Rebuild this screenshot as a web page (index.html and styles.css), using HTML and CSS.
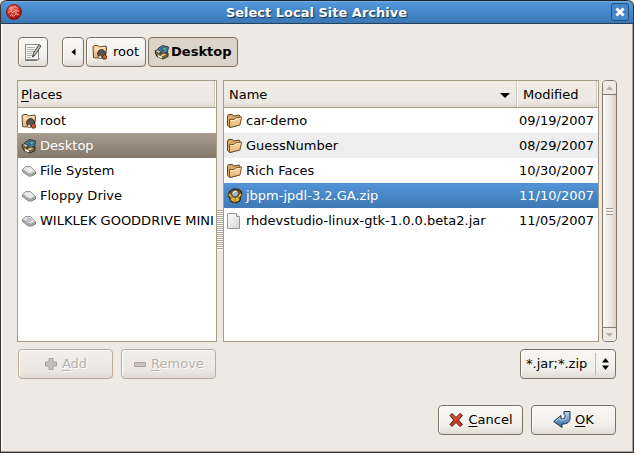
FILE: index.html
```html
<!DOCTYPE html>
<html lang="en">
<head>
<meta charset="utf-8">
<title>Select Local Site Archive</title>
<link rel="stylesheet" href="styles.css">
</head>
<body>
<svg class="defs" aria-hidden="true">
  <defs>
    <linearGradient id="paper" x1="0" y1="0" x2="1" y2="1"><stop offset="0" stop-color="#fff"/><stop offset="1" stop-color="#d2d2d0"/></linearGradient>
    <linearGradient id="tan" x1="0" y1="0" x2="0" y2="1"><stop offset="0" stop-color="#fbd9a6"/><stop offset="1" stop-color="#e8b678"/></linearGradient>
    <linearGradient id="blue" x1="0" y1="0" x2="0" y2="1"><stop offset="0" stop-color="#b4d2ee"/><stop offset="1" stop-color="#2f67a5"/></linearGradient>
    <radialGradient id="red" cx=".4" cy=".3" r=".7"><stop offset="0" stop-color="#f0786c"/><stop offset=".6" stop-color="#cf2a24"/><stop offset="1" stop-color="#8c1210"/></radialGradient>
    <symbol id="folder" viewBox="0 0 16 16">
      <path d="M.5 3 1.500 1.500h4L6.500 3 12 2l1 1V6L12 12l-9 2.500L.5 12.500z" fill="#d9a766" stroke="#5f4a30"/>
      <path d="M2.500 6.500H7L8.500 5l6-1-1.500 8-10.500 2.500z" fill="url(#tan)" stroke="#75552f"/>
      <path d="M3.500 7.500H7.500L9 6l4.500-.7" stroke="#fff0d4" stroke-width=".8" fill="none"/>
    </symbol>
    <symbol id="home" viewBox="0 0 16 16">
      <path d="M1.500 13.500 1 2.500 3 1.500h3l1.500 1.500L14 2l.500 3-1 8-10 1z" fill="url(#tan)" stroke="#5f4527"/>
      <path d="M3 5.500h4L8.500 4l4-.5" stroke="#fff0d0" fill="none"/>
      <path d="m5.500 9 2-3 3-.5 3 2.500v4l-3 1.500-4-.5z" fill="#57524f" stroke="#36312e"/>
      <path d="m6 12.500 3-1.500 1 3.500H7z" fill="#ddd8d0" stroke="#5a4634" stroke-width=".6"/>
      <path d="m10.500 12 2-1.500 2 1.500-.5 3h-3z" fill="#dd6726" stroke="#64250b"/>
    </symbol>
    <symbol id="desktop" viewBox="0 0 16 16">
      <path d="M1 8.500 4 6l10 3v3.500L9 15l-6-2.500z" fill="#8e7548" stroke="#24221e"/>
      <path d="m4 4.500 4.500-3 6 1.500-1 5-5 2.500-4.500-3z" fill="#667f8c" stroke="#29333a"/>
      <path d="M6 4.500 8.700 2.700l4.500 1-1 3.300-3.200 1z" fill="#2668a8"/>
      <path d="m9 4.300 3-.6-.5 2.500-1.500.3z" fill="#5abf72"/>
      <path d="m.8 7 3.200-1.500 4 2.500-3.500 1.500z" fill="#bdbcb4" stroke="#3b3a36"/>
      <path d="m5 11 5-2 3.500 1.500-4.500 2.500z" fill="#d9bd7c" stroke="#3f3421" stroke-width=".8"/>
      <path d="M4 11v2l4 1.500v-2z" fill="#f2eee2"/>
    </symbol>
    <symbol id="drive" viewBox="0 0 16 16">
      <path d="M1.500 7v1.500L7.500 13h3l4-2V8.500z" fill="#b5b5b5" stroke="#7e7e7e"/>
      <path d="M1.500 6.500 4.500 3.500h5l5 5-4 2.500H8z" fill="#dedede" stroke="#999"/>
      <path d="M4 6.500 5.500 4.700h3.500l3 3-2 1.300H8z" fill="#ebebeb"/>
      <path d="M11.500 11h1.500" stroke="#55a05a"/>
    </symbol>
    <symbol id="disc" viewBox="0 0 16 16">
      <use href="#drive"/><ellipse cx="8" cy="7" rx="2.500" ry="1.500" fill="#c9c5df" stroke="#aaa" stroke-width=".7"/>
    </symbol>
    <symbol id="package" viewBox="0 0 16 16">
      <path d="m1 6 2-3 3-2h5l3 2 1 3-1.500 3-.5 4-4 2-5-1.500L2 9z" fill="#6d4914" stroke="#2d210e"/>
      <path d="m3.500 8 4.500 2 4.500-2-.5 4.500L8 14.200l-4-1.700z" fill="#dfb044"/>
      <path d="M8 10.500v4" stroke="#a77824"/>
      <circle cx="8" cy="5.500" r="3.500" fill="#aeb3b4" stroke="#4c4c48"/>
      <path d="m6 5 2-1.700 2 .5" stroke="#fff" fill="none"/>
      <path d="m1 6.500 2-1.500 2.500 4L4 10zm14 0-2-1.500-2.500 4 1.500 1z" fill="#efbf57" stroke="#4c3412" stroke-width=".6"/>
    </symbol>
    <symbol id="file" viewBox="0 0 16 16">
      <path d="M.5.500h9l3 3v12H.5z" fill="url(#paper)" stroke="#969694"/>
      <path d="M9.500.5v3h3" fill="#fff" stroke="#969694"/>
    </symbol>
    <symbol id="edit" viewBox="0 0 20 20">
      <path d="M2.500 2.500h13v15h-13z" fill="#f8f8f6" stroke="#8a8a88"/>
      <path d="M2 18.500h12l2.500-2.500" stroke="#777" fill="none"/>
      <path d="M4 5.500h8M4 7.500h7M4 9.500h7M4 11.500h5M4 13.500h5M4 15.500h4" stroke="#b0b0ae"/>
      <path d="m9.500 15 1-4 5.500-8.500 2 1.500-5.500 8.500z" fill="#bbb" stroke="#4c4c4c"/>
      <path d="m9.500 15 .5-2 1.500 1z" fill="#222"/>
    </symbol>
  </defs>
</svg>
<main class="window">
  <header class="titlebar">
    <svg class="app-icon" viewBox="0 0 16 16" aria-hidden="true">
      <circle cx="8" cy="8" r="7.500" fill="url(#red)" stroke="#8f1915"/>
      <path d="M3 5.500 5 3l2.500 1L9 2l3 2.500M2 8.500l3-1.500 2 2 3-3 3 1.500M4 12l2-1.500 1.500 2L10 10l3 1M5 3v4m5-1v4" fill="none" stroke="#f4b1a9" stroke-width=".9"/>
    </svg>
    <h1>Select Local Site Archive</h1>
    <button class="close" type="button" aria-label="Close"><svg viewBox="0 0 10 10"><path d="m2 2 6 6m0-6L2 8" stroke="#fff" stroke-width="2.400"/></svg></button>
  </header>
  <form class="content">
    <nav class="pathbar" aria-label="Location">
      <button class="btn square" type="button" aria-label="Type a file name"><svg class="icon-large"><use href="#edit"/></svg></button>
      <div class="crumbs">
        <button class="btn back" type="button" aria-label="Scroll path back"><svg viewBox="0 0 5 8"><path d="M4.500.5v7L.5 4z"/></svg></button>
        <button class="btn crumb" type="button"><svg class="icon"><use href="#home"/></svg>root</button>
        <button class="btn crumb current" type="button"><svg class="icon"><use href="#desktop"/></svg>Desktop</button>
      </div>
    </nav>
    <section class="panes">
      <div class="pane places">
        <table>
          <thead><tr><th><u>P</u>laces</th></tr></thead>
          <tbody>
            <tr><td><div class="entry"><svg class="icon"><use href="#home"/></svg>root</div></td></tr>
            <tr class="selected"><td><div class="entry"><svg class="icon"><use href="#desktop"/></svg>Desktop</div></td></tr>
            <tr><td><div class="entry"><svg class="icon"><use href="#drive"/></svg>File System</div></td></tr>
            <tr><td><div class="entry"><svg class="icon"><use href="#drive"/></svg>Floppy Drive</div></td></tr>
            <tr><td><div class="entry"><svg class="icon"><use href="#disc"/></svg>WILKLEK GOODDRIVE MINI</div></td></tr>
          </tbody>
        </table>
      </div>
      <div class="splitter"><span></span></div>
      <div class="pane files">
        <table>
          <thead><tr><th><div class="sort">Name<svg viewBox="0 0 10 5"><path d="M0 0h10L5 5z"/></svg></div></th><th class="date">Modified</th></tr></thead>
          <tbody>
            <tr><td><div class="entry"><svg class="icon"><use href="#folder"/></svg>car-demo</div></td><td class="date">09/19/2007</td></tr>
            <tr class="alt"><td><div class="entry"><svg class="icon"><use href="#folder"/></svg>GuessNumber</div></td><td class="date">08/29/2007</td></tr>
            <tr><td><div class="entry"><svg class="icon"><use href="#folder"/></svg>Rich Faces</div></td><td class="date">10/30/2007</td></tr>
            <tr class="selected"><td><div class="entry"><svg class="icon"><use href="#package"/></svg>jbpm-jpdl-3.2.GA.zip</div></td><td class="date">11/10/2007</td></tr>
            <tr><td><div class="entry"><svg class="icon"><use href="#file"/></svg>rhdevstudio-linux-gtk-1.0.0.beta2.jar</div></td><td class="date">11/05/2007</td></tr>
          </tbody>
        </table>
      </div>
      <div class="scrollbar" aria-hidden="true">
        <div class="step"><svg viewBox="0 0 7 4"><path d="M0 4h7L3.500 0z"/></svg></div>
        <div class="thumb"><span></span></div>
        <div class="step"><svg viewBox="0 0 7 4"><path d="M0 0h7L3.500 4z"/></svg></div>
      </div>
    </section>
    <div class="tools">
      <button class="btn medium" type="button" disabled><svg class="icon-small" viewBox="0 0 14 14"><path d="M5 1.500h4V5h3.500v4H9v3.500H5V9H1.500V5H5z" fill="#c5c2be" stroke="#a5a19c"/></svg><span><u>A</u>dd</span></button>
      <button class="btn medium" type="button" disabled><svg class="icon-small" viewBox="0 0 14 14"><path d="M1.500 5.500h11v4h-11z" fill="#cdc5c2" stroke="#aaa29e"/></svg><span><u>R</u>emove</span></button>
      <div class="filter">
        <select class="btn" aria-label="File filter"><option>*.jar;*.zip</option></select>
        <svg viewBox="0 0 7 12" aria-hidden="true"><path d="M0 4.500h7L3.500 0zM0 7.500h7L3.500 12z"/></svg>
      </div>
    </div>
    <footer class="actions">
      <button class="btn" type="button"><svg class="icon" viewBox="0 0 16 16"><path d="m2 3.500 2-2 4 4 4-4 2.500 2-4 4.500 4 4.500-2.500 2-4-4-4 4-2-2 3.700-4.500z" fill="#cd3b24" stroke="#54221a"/><path d="m3.500 3.500 4.500 4 4-4" fill="none" stroke="#e0664e"/></svg><span><u>C</u>ancel</span></button>
      <button class="btn" type="button"><svg class="icon-wide" viewBox="0 0 18 18"><path d="M11 .500h6V7c0 4-2.500 6-8 6v3.500L.7 10.500 8 4.500V8c2.500 0 4-.5 4-2.500V4.500l-1-1z" fill="url(#blue)" stroke="#1c2f48"/><path d="M2.500 10.300 7 6.700V9c4 0 6.500-.5 6.500-3.500v-3" fill="none" stroke="#a9cbe9"/></svg><span><u>O</u>K</span></button>
    </footer>
  </form>
</main>
</body>
</html>
```
FILE: styles.css
```css
* { box-sizing: border-box; }
body { margin: 0; background: #edeae3; color: #000; font: 13px/16px "DejaVu Sans", sans-serif; }
button, select { font: inherit; color: inherit; }
svg { display: block; flex: none; }
u { text-underline-offset: 2px; text-decoration-thickness: 1px; text-decoration-skip-ink: none; }
.defs { position: absolute; width: 0; height: 0; }

.window {
  display: flex;
  flex-direction: column;
  min-height: 100vh;
  background: #edeae3;
  border: solid #38322f;
  border-width: 0 1px 1px;
  border-radius: 6px 6px 0 0;
  box-shadow: inset -1px -1px #aaa39a, inset 1px 0 #fff;
}
.titlebar {
  display: flex;
  align-items: center;
  height: 24px;
  padding: 0 4px 0 5px;
  border-top: 1px solid #20242b;
  border-bottom: 1px solid #263f5b;
  border-radius: 6px 6px 0 0;
  background: linear-gradient(#79ade2, #5294d8 2px, #4488c9 50%, #3b78b3);
}
.app-icon { width: 16px; height: 16px; }
.titlebar h1 {
  flex: 1;
  margin: 0;
  padding-top: 1px;
  color: #fff;
  font-size: 13px;
  line-height: 18px;
  text-align: center;
  text-shadow: 1px 1px 1px #17324e;
}
.close {
  display: grid;
  place-items: center;
  width: 18px;
  height: 18px;
  padding: 0;
  border: 1px solid #25507c;
  border-radius: 3px;
  background: #4387c8;
}
.close svg { width: 12px; height: 12px; }

.content { flex: 1; display: flex; flex-direction: column; padding: 13px 16px 17px; }

.btn {
  display: flex;
  align-items: center;
  justify-content: center;
  gap: 4px;
  height: 30px;
  padding: 0 5px;
  border: 1px solid #7d7262;
  border-radius: 4px;
  background: linear-gradient(#f8f7f5, #f1efeb 70%, #dfdbd4);
  box-shadow: inset 1px 1px #fff;
}
.btn:disabled {
  color: #b5b1ab;
  border-color: #b9ab9a;
  background: linear-gradient(#f2efeb, #ebe7e1 75%, #dfdad2);
  text-shadow: 1px 1px #fff;
}
.icon { width: 16px; height: 16px; }
.icon-small { width: 14px; height: 14px; }
.icon-wide { width: 18px; height: 18px; }
.icon-large { width: 20px; height: 20px; }

.pathbar { display: flex; gap: 14px; padding-left: 1px; }
.square { width: 30px; }
.crumbs { display: flex; gap: 2px; }
.back { width: 22px; }
.back svg { width: 5px; height: 8px; }
.crumb { gap: 5px; padding: 0 6px 0 5px; }
.current { gap: 1px; padding: 0 5px; background: #dcd3c9; box-shadow: none; font-weight: bold; }

.panes { flex: 1; display: flex; min-height: 240px; margin: 13px 0 7px; }
.pane { background: #fff; border: 1px solid #a69b84; overflow: hidden; }
.places { width: 200px; }
.files { flex: 1; }
.pane table { width: 100%; border-collapse: separate; border-spacing: 0; table-layout: fixed; }
.pane th {
  height: 27px;
  padding: 2px 4px 0 3px;
  border-bottom: 1px solid #a69b84;
  background: linear-gradient(#efece6, #ece9e2 80%, #dedad2);
  box-shadow: inset -1px 0 #fff, inset -2px 0 #ccc5b9;
  font-weight: normal;
  text-align: left;
}
.files th { padding-left: 5px; }
.pane td { height: 25px; padding: 0 3px; white-space: nowrap; }
.pane .date { width: 80px; padding-right: 4px; }
.files td.date { padding-left: 0; text-align: right; }
.entry { display: flex; align-items: center; gap: 3px; }
.sort { display: flex; align-items: center; justify-content: space-between; padding-right: 4px; }
.sort svg { width: 10px; height: 5px; }
.alt { background: #eee; }
.selected { color: #fff; }
.places .selected td { background: linear-gradient(#a79d90, #857868); }
.files .selected td { background: linear-gradient(#5294d6, #3d7ab5); }
.splitter { display: flex; align-items: center; width: 6px; }
.splitter span { width: 100%; height: 40px; margin-top: 38px; background: repeating-linear-gradient(#aaa397 0 1px, #fff 1px 2px); }

.scrollbar {
  display: flex;
  flex-direction: column;
  width: 15px;
  margin-left: 3px;
  border: 1px solid #857a69;
  border-radius: 4px;
  background: linear-gradient(90deg, #faf9f7, #ece7e1 60%, #d9d2c9);
}
.step { display: grid; place-items: center; height: 13px; background: #edeae3; border-radius: 3px; }
.step svg { width: 7px; height: 4px; fill: #b7b2aa; }
.thumb { flex: 1; display: grid; place-items: center; border: solid #857a69; border-width: 1px 0; }
.thumb span { width: 7px; height: 7px; background: repeating-linear-gradient(#a59c8f 0 1px, #fff 1px 2px, #eeeae5 2px 3px); }

.tools { display: flex; gap: 8px; padding: 0 1px; }
.medium { width: 95px; }
.filter { position: relative; width: 96px; margin-left: auto; }
.filter select { width: 100%; appearance: none; }
.filter svg {
  position: absolute;
  top: 4px;
  right: 1px;
  width: 20px;
  height: 22px;
  padding: 5px 6px;
  border-left: 1px solid #c1b9ad;
  pointer-events: none;
}
.actions { display: flex; justify-content: flex-end; gap: 8px; margin-top: 26px; padding-right: 1px; }
.actions .btn { width: 85px; }
```
